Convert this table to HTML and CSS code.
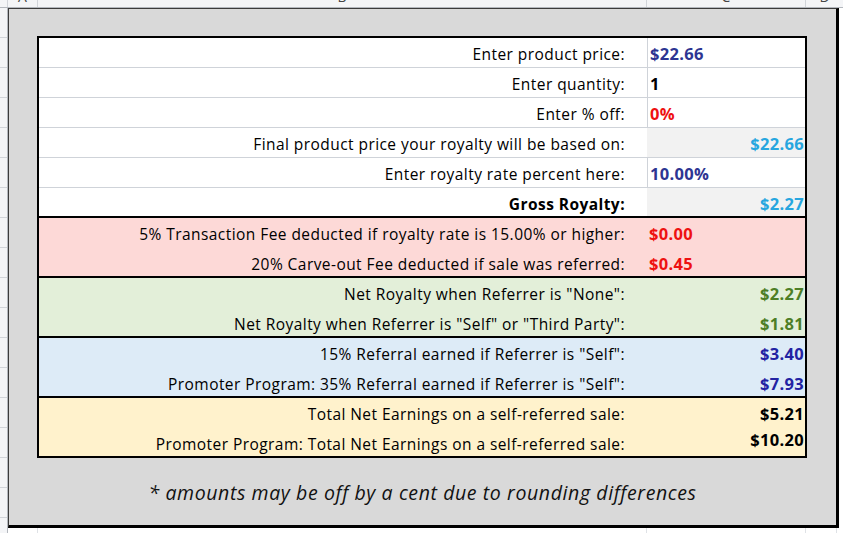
FILE: index.html
```html
<!DOCTYPE html>
<html>
<head>
<meta charset="utf-8">
<link rel="stylesheet" href="styles.css">
</head>
<body>
<div class="colhdr">
  <div class="ch corner"></div>
  <div class="ch ca"><span>A</span></div>
  <div class="ch cb"><span>B</span></div>
  <div class="ch cc"><span>C</span></div>
  <div class="ch cd"><span>D</span></div>
</div>
<div class="main">
  <div class="rowhdr"></div>
  <div class="sheet">
    <div class="panel">
      <div class="calc">
        <div class="sec sec-top">
          <div class="row grid"><div class="lab">Enter product price:</div><div class="val white dblue">$22.66</div></div>
          <div class="row grid"><div class="lab">Enter quantity:</div><div class="val white black">1</div></div>
          <div class="row grid"><div class="lab">Enter % off:</div><div class="val white red">0%</div></div>
          <div class="row grid"><div class="lab">Final product price your royalty will be based on:</div><div class="val shade cyan right">$22.66</div></div>
          <div class="row grid"><div class="lab">Enter royalty rate percent here:</div><div class="val white dblue">10.00%</div></div>
          <div class="row last"><div class="lab bold">Gross Royalty:</div><div class="val shade cyan right">$2.27</div></div>
        </div>
        <div class="sec sec-pink">
          <div class="row"><div class="lab">5% Transaction Fee deducted if royalty rate is 15.00% or higher:</div><div class="val red">$0.00</div></div>
          <div class="row last"><div class="lab">20% Carve-out Fee deducted if sale was referred:</div><div class="val red">$0.45</div></div>
        </div>
        <div class="sec sec-green">
          <div class="row"><div class="lab">Net Royalty when Referrer is "None":</div><div class="val green right">$2.27</div></div>
          <div class="row last"><div class="lab">Net Royalty when Referrer is "Self" or "Third Party":</div><div class="val green right">$1.81</div></div>
        </div>
        <div class="sec sec-blue">
          <div class="row"><div class="lab">15% Referral earned if Referrer is "Self":</div><div class="val blue right">$3.40</div></div>
          <div class="row last"><div class="lab">Promoter Program: 35% Referral earned if Referrer is "Self":</div><div class="val blue right">$7.93</div></div>
        </div>
        <div class="sec sec-yellow">
          <div class="row"><div class="lab">Total Net Earnings on a self-referred sale:</div><div class="val black right">$5.21</div></div>
          <div class="row last"><div class="lab">Promoter Program: Total Net Earnings on a self-referred sale:</div><div class="val black right raised">$10.20</div></div>
        </div>
      </div>
      <p class="note">* amounts may be off by a cent due to rounding differences</p>
    </div>
  </div>
</div>
</body>
</html>
```

FILE: styles.css
```css
html, body {
  margin: 0;
  padding: 0;
}
body {
  width: 843px;
  height: 533px;
  overflow: hidden;
  background: #ffffff;
  font-family: "Open Sans", Lato, "Liberation Sans", sans-serif;
  color: #000;
}

/* spreadsheet column header strip */
.colhdr {
  display: flex;
  height: 8px;
  box-sizing: border-box;
  background: #f4f5f7;
  border-bottom: 1px solid #b4b8be;
  overflow: hidden;
}
.ch {
  box-sizing: border-box;
  border-right: 1px solid #d2d5da;
  text-align: center;
  font-size: 14px;
  line-height: 14px;
  color: #444;
  overflow: hidden;
}
.ch span {
  display: block;
  margin-top: -10px;
}
.corner { width: 8px; }
.ca { width: 30px; }
.cb { width: 609px; }
.cc { width: 159px; }
.cd { width: 37px; border-right: none; }

.main {
  display: flex;
  height: 525px;
}
.rowhdr {
  width: 8px;
  box-sizing: border-box;
  background-color: #f4f5f7;
  border-right: 1px solid #b4b8be;
  background-image: repeating-linear-gradient(to bottom, transparent 0, transparent 29px, #d2d5da 29px, #d2d5da 30px);
}
.sheet {
  flex: 1;
  background-color: #fff;
  background-image:
    linear-gradient(#dfe2e6, #dfe2e6),
    linear-gradient(#dfe2e6, #dfe2e6),
    linear-gradient(#dfe2e6, #dfe2e6),
    linear-gradient(#dfe2e6, #dfe2e6);
  background-size: 1px 100%;
  background-repeat: no-repeat;
  background-position: 29px 0, 638px 0, 797px 0, 828px 0;
}

/* grey panel */
.panel {
  width: 831px;
  height: 520px;
  box-sizing: border-box;
  background: #d9d9d9;
  border-top: 1px solid #3c3c3c;
  border-left: 1px solid #3c3c3c;
  border-right: 3px solid #000;
  border-bottom: 3px solid #000;
  padding-top: 27px;
  padding-left: 28px;
}

.calc {
  width: 770px;
  box-sizing: border-box;
  border: 2px solid #000;
  background: #fff;
}
.sec + .sec {
  border-top: 2px solid #000;
}
.sec-top { background: #fff; }
.sec-pink { background: #fdd9d7; }
.sec-green { background: #e3efd9; }
.sec-blue { background: #ddebf7; }
.sec-yellow { background: #fff2cc; }

.row {
  display: grid;
  grid-template-columns: 608px 158px;
  height: 30px;
  box-sizing: border-box;
  font-size: 15.5px;
  letter-spacing: 0.44px;
  line-height: 20px;
}
.row.last {
  height: 28px;
}
.row.grid {
  border-bottom: 1px solid #cfd3d9;
}
.lab {
  text-align: right;
  padding: 6px 22px 0 0;
  white-space: nowrap;
}
.bold { font-weight: 700; }
.val {
  box-sizing: border-box;
  padding: 6px 1px 0 2px;
  font-size: 16.5px;
  letter-spacing: 0.3px;
  font-weight: 700;
  white-space: nowrap;
}
.val.white {
  border-left: 1px solid #cfd3d9;
}
.val.shade {
  background: #f2f2f2;
}
.val.right {
  text-align: right;
}
.val.raised {
  padding-top: 2px;
}
.dblue { color: #2d3592; }
.black { color: #000; }
.red { color: #ee1111; }
.cyan { color: #27a6df; }
.green { color: #4d7e26; }
.blue { color: #2323a3; }

.note {
  margin: 21px 0 0 -28px;
  text-align: center;
  font-style: italic;
  font-size: 19.5px;
  letter-spacing: 0.6px;
  line-height: 28px;
  color: #111;
}
```
